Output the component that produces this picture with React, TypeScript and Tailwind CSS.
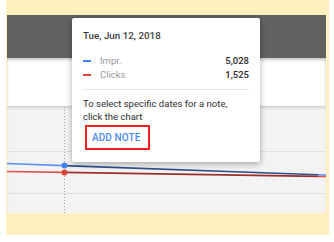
import React from 'react';

const font = { fontFamily: 'Roboto, "Liberation Sans", sans-serif' };

const rows = [
  { name: 'Impr.', value: '5,028', color: 'bg-[#4285f4]' },
  { name: 'Clicks', value: '1,525', color: 'bg-[#ea4335]' },
];

const Chart = () => (
  <svg width="319" height="107" viewBox="0 0 319 107" className="block">
    <line x1="0" y1="44.5" x2="319" y2="44.5" stroke="#e0e0e0" strokeWidth="1" />
    <line x1="0" y1="86.5" x2="319" y2="86.5" stroke="#e0e0e0" strokeWidth="1" />
    <line x1="57.5" y1="0" x2="57.5" y2="107" stroke="#9e9e9e" strokeWidth="1" strokeDasharray="1 2" />
    {/* red series */}
    <line x1="0" y1="64.5" x2="57" y2="65.4" stroke="#e0544a" strokeWidth="1.6" />
    <line x1="57" y1="65.4" x2="311" y2="69.4" stroke="#9c2f2a" strokeWidth="1.6" />
    <line x1="311" y1="69.4" x2="319" y2="69.5" stroke="#e0544a" strokeWidth="1.6" />
    {/* blue series */}
    <line x1="0" y1="56.5" x2="57" y2="58.6" stroke="#5b93f2" strokeWidth="1.6" />
    <line x1="57" y1="58.6" x2="311" y2="67.7" stroke="#2f4f8c" strokeWidth="1.6" />
    <line x1="311" y1="67.7" x2="319" y2="68" stroke="#5b93f2" strokeWidth="1.6" />
    <circle cx="57.5" cy="58.6" r="3" fill="#4285f4" />
    <circle cx="57.5" cy="65.4" r="3" fill="#db4437" />
  </svg>
);

const Tooltip = () => (
  <div
    className="absolute left-[65px] top-[3px] w-[188px] h-[144px] bg-white rounded-[2px] shadow-[0_2px_6px_rgba(0,0,0,0.32)] px-[11px] pt-[11px]"
    style={font}
  >
    <div className="h-[13px] leading-[13px] text-[9.8px] font-medium text-[#3c3c3c]">Tue, Jun 12, 2018</div>
    <div className="mt-[12px]">
      {rows.map(r => (
        <div key={r.name} className="flex items-center h-[14px] text-[9.5px]">
          <span className={`w-[8px] h-[2px] ${r.color}`} />
          <span className="ml-[9px] text-[#9a9a9a]">{r.name}</span>
          <span className="ml-auto font-medium text-[#2a2a2a]">{r.value}</span>
        </div>
      ))}
    </div>
    <div className="mt-[7px] h-px bg-[#e4e4e4]" />
    <p className="mt-[7px] text-[9.5px] leading-[13.4px] text-[#2e2e2e]">
      To select specific dates for a note,
      <br />
      click the chart
    </p>
    <div className="mt-[1px] ml-[2px] w-[65px] h-[25px] border-[2.5px] border-[#f2201c] flex items-center pl-[5px]">
      <span className="text-[10px] font-medium text-[#4a8af4] tracking-[0.1px]">ADD NOTE</span>
    </div>
  </div>
);

export default function App() {
  return (
    <div className="w-[334px] h-[242px] bg-white overflow-hidden">
      <div className="ml-[6px] w-[323px] h-[235px] bg-[#fff0bd] pl-px pr-[3px] pt-[15px]">
        <div className="relative h-[198px] flex flex-col">
          <div className="h-[43px] bg-[#616161]" />
          <div className="h-[48px] bg-white shadow-[inset_0_2px_3px_rgba(0,0,0,0.22)]" />
          <div className="h-[107px] bg-[#f3f3f3] border-t border-[#d0d0d0] shadow-[inset_0_2px_2px_rgba(0,0,0,0.08)]">
            <Chart />
          </div>
          <Tooltip />
        </div>
      </div>
    </div>
  );
}
